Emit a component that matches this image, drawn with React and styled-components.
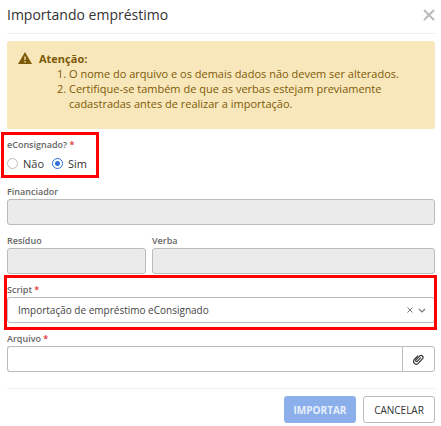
import { useState } from "react"
import styled, { createGlobalStyle } from "styled-components"

const GlobalStyle = createGlobalStyle`
    * {
        box-sizing: border-box;
    }
    body {
        margin: 0;
        background: #fff;
        color: #333;
        font-family: "Open Sans", "Noto Sans", sans-serif;
        font-size: 11px;
    }
    button, input, select {
        font-family: inherit;
        color: inherit;
    }
`

const Modal = styled.div`
    padding: 0 6px 0 7px;
`

const Header = styled.header`
    height: 34px;
    padding-bottom: 3px;
    display: flex;
    align-items: center;
    justify-content: space-between;
    border-bottom: 1px solid #eee;
`

const Title = styled.h1`
    margin: 0;
    font-size: 14px;
    font-weight: 400;
    line-height: 20px;
`

const IconButton = styled.button`
    padding: 0;
    border: 0;
    background: none;
    display: flex;
    color: ${(props) => props.$color};
    cursor: pointer;
`

const Alert = styled.div`
    margin-top: 7px;
    padding: 10px 11px 18px;
    display: flex;
    gap: 7px;
    border-radius: 3px;
    background: #f8e7bb;
    color: #7d5a08;
    line-height: 15px;

    svg {
        flex: none;
    }
`

const AlertTitle = styled.strong`
    display: block;
    font-weight: 700;
`

const AlertList = styled.ol`
    margin: 0;
    padding-left: 30px;
`

const Form = styled.form`
    padding-top: 8px;
    display: flex;
    flex-direction: column;
    gap: 8px;
`

const Row = styled.div`
    display: grid;
    grid-template-columns: 139fr 283fr;
    gap: 6px;
`

const Field = styled.div`
    display: flex;
    flex-direction: column;
    min-width: 0;
`

const Label = styled.label`
    font-size: 9px;
    font-weight: 600;
    line-height: 15px;
    color: #666;
`

const Required = styled.span`
    color: #e02b2b;
`

const Input = styled.input`
    width: 100%;
    min-width: 0;
    height: 26px;
    padding: 0 10px;
    border: 1px solid #bbb;
    border-radius: 3px;
    background: #fff;
    font-size: 10px;

    &:disabled {
        background: #ebebeb;
    }
`

// red frame drawn around the fields the user has to look at
const Highlight = styled.div`
    position: relative;
    align-self: ${(props) => (props.$fit ? "flex-start" : "stretch")};

    &::after {
        content: "";
        position: absolute;
        inset: ${(props) => props.$inset};
        border: 3px solid #f00;
        pointer-events: none;
    }
`

const RadioGroup = styled.fieldset`
    margin: 0;
    padding: 0;
    border: 0;
    width: 86px;
`

const Legend = styled.legend`
    padding: 0;
    font-size: 9px;
    font-weight: 600;
    line-height: 15px;
    color: #666;
`

const Options = styled.div`
    height: 24px;
    padding-bottom: 2px;
    display: flex;
    align-items: center;
    gap: 8px;
`

const RadioLabel = styled.label`
    display: flex;
    align-items: center;
    gap: 5px;
    line-height: 15px;
`

const Radio = styled.input`
    appearance: none;
    flex: none;
    margin: 0;
    width: 11px;
    height: 11px;
    border: 1px solid #bbb;
    border-radius: 50%;
    background: #fff;

    &:checked {
        border-color: #2e6fdb;
        background: radial-gradient(circle, #2e6fdb 0 2px, #fff 3px);
    }
`

const SelectBox = styled.div`
    height: 26px;
    padding-right: 8px;
    display: flex;
    align-items: center;
    gap: 5px;
    border: 1px solid #bbb;
    border-radius: 3px;
    color: #777;
`

const Select = styled.select`
    appearance: none;
    flex: 1;
    min-width: 0;
    height: 24px;
    padding: 0 10px;
    border: 0;
    background: none;
    color: #444;
    font-size: 10px;
`

const FileBox = styled.div`
    display: flex;

    ${Input} {
        border-right: 0;
        border-radius: 3px 0 0 3px;
    }
`

const FileButton = styled.button`
    flex: none;
    width: 33px;
    height: 26px;
    padding: 0;
    display: flex;
    align-items: center;
    justify-content: center;
    border: 1px solid #bbb;
    border-radius: 0 3px 3px 0;
    background: #fff;
`

const Footer = styled.footer`
    margin-top: 16px;
    padding-top: 7px;
    display: flex;
    justify-content: flex-end;
    gap: 7px;
    border-top: 1px solid #eee;
`

const Button = styled.button`
    width: 72px;
    height: 27px;
    padding: 0;
    border: 1px solid ${(props) => (props.$primary ? "#8aafeb" : "#bbb")};
    border-radius: 3px;
    background: ${(props) => (props.$primary ? "#8aafeb" : "#fff")};
    color: ${(props) => (props.$primary ? "#e8effb" : "#333")};
    font-size: 10px;
    font-weight: ${(props) => (props.$primary ? 700 : 400)};
`

const CloseIcon = ({ size, width }) => (
    <svg width={size} height={size} viewBox="0 0 12 12" stroke="currentColor" strokeWidth={width} aria-hidden="true">
        <path d="M1 1L11 11M11 1L1 11" />
    </svg>
)

const WarningIcon = () => (
    <svg width="14" height="15" viewBox="0 0 14 15" aria-hidden="true">
        <path d="M7 1L14 13H0Z" fill="currentColor" />
        <path d="M7 5.5V9M7 10V11.4" stroke="#f8e7bb" strokeWidth="1.3" />
    </svg>
)

const ChevronIcon = () => (
    <svg width="8" height="8" viewBox="0 0 8 8" fill="none" stroke="currentColor" strokeWidth="1.2" aria-hidden="true">
        <path d="M1 3L4 6L7 3" />
    </svg>
)

const ClipIcon = () => (
    <svg width="11" height="11" viewBox="0 0 24 24" fill="none" stroke="currentColor" strokeWidth="2.6" aria-hidden="true">
        <path d="M17 8L9.5 16a1.8 1.8 0 0 1-3-3L15 4a4.3 4.3 0 0 1 6 6L11.5 20.5a6 6 0 0 1-8.5-8.5L11 3.5" />
    </svg>
)

export default function App() {
    const [consignado, setConsignado] = useState("sim")
    const [script, setScript] = useState("econsignado")

    return (
        <Modal role="dialog" aria-labelledby="titulo">
            <GlobalStyle />
            <Header>
                <Title id="titulo">Importando empréstimo</Title>
                <IconButton $color="#bbb" aria-label="Fechar">
                    <CloseIcon size={12} width={2} />
                </IconButton>
            </Header>
            <Alert role="alert">
                <WarningIcon />
                <div>
                    <AlertTitle>Atenção:</AlertTitle>
                    <AlertList>
                        <li>O nome do arquivo e os demais dados não devem ser alterados.</li>
                        <li>Certifique-se também de que as verbas estejam previamente cadastradas antes de realizar a importação.</li>
                    </AlertList>
                </div>
            </Alert>
            <Form id="importacao" onSubmit={(e) => e.preventDefault()}>
                <Highlight $fit $inset="-5px -6px -2px -6px">
                    <RadioGroup>
                        <Legend>eConsignado? <Required>*</Required></Legend>
                        <Options>
                            {[["nao", "Não"], ["sim", "Sim"]].map(([value, text]) => (
                                <RadioLabel key={value}>
                                    <Radio
                                        type="radio"
                                        name="consignado"
                                        value={value}
                                        checked={consignado === value}
                                        onChange={() => setConsignado(value)}
                                    />
                                    {text}
                                </RadioLabel>
                            ))}
                        </Options>
                    </RadioGroup>
                </Highlight>
                <Field>
                    <Label htmlFor="financiador">Financiador</Label>
                    <Input id="financiador" disabled />
                </Field>
                <Row>
                    <Field>
                        <Label htmlFor="residuo">Resíduo</Label>
                        <Input id="residuo" disabled />
                    </Field>
                    <Field>
                        <Label htmlFor="verba">Verba</Label>
                        <Input id="verba" disabled />
                    </Field>
                </Row>
                <Highlight $inset="-7px -2px -7px -3px">
                    <Field>
                        <Label htmlFor="script">Script <Required>*</Required></Label>
                        <SelectBox>
                            <Select id="script" value={script} onChange={(e) => setScript(e.target.value)}>
                                <option value=""></option>
                                <option value="econsignado">Importação de empréstimo eConsignado</option>
                            </Select>
                            <IconButton type="button" $color="#777" aria-label="Limpar" onClick={() => setScript("")}>
                                <CloseIcon size={6} width={2} />
                            </IconButton>
                            <ChevronIcon />
                        </SelectBox>
                    </Field>
                </Highlight>
                <Field>
                    <Label htmlFor="arquivo">Arquivo <Required>*</Required></Label>
                    <FileBox>
                        <Input id="arquivo" />
                        <FileButton type="button" aria-label="Anexar arquivo">
                            <ClipIcon />
                        </FileButton>
                    </FileBox>
                </Field>
            </Form>
            <Footer>
                <Button form="importacao" $primary>IMPORTAR</Button>
                <Button type="button">CANCELAR</Button>
            </Footer>
        </Modal>
    )
}
